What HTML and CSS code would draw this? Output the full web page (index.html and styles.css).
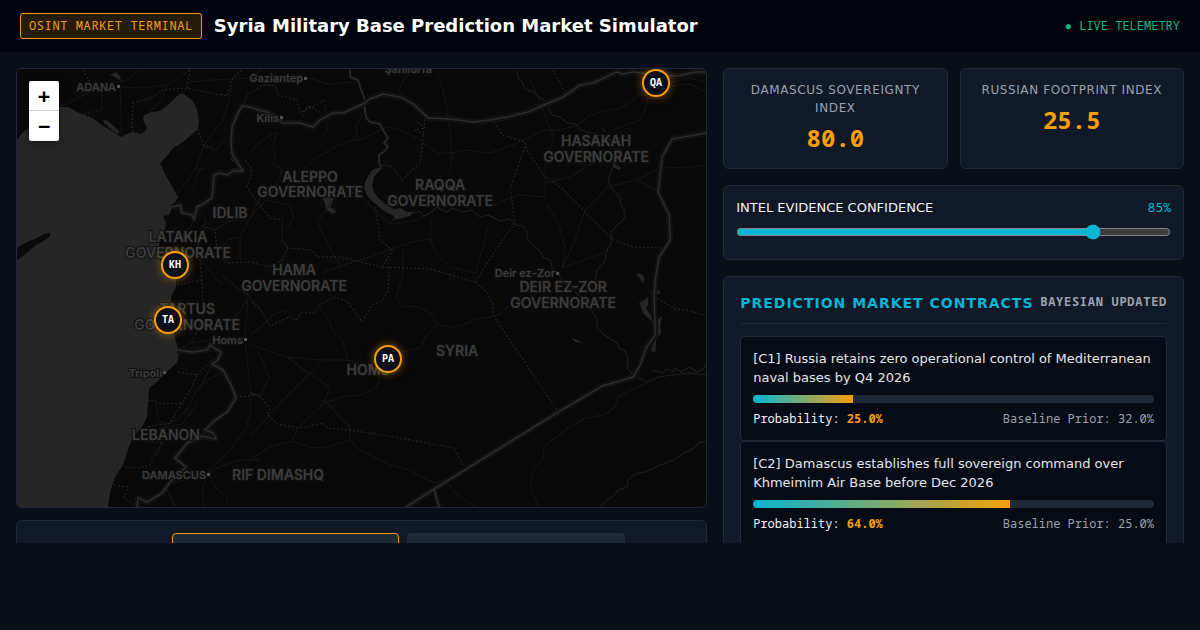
FILE: index.html
```html
<!DOCTYPE html>
<html lang="en">
<head>
    <meta charset="UTF-8">
    <meta name="viewport" content="width=device-width, initial-scale=1.0">
    <title>Syria Military Base Prediction Market Simulator</title>
    <link rel="stylesheet" href="styles.css">
</head>
<body>
    <header class="top-bar">
        <div class="brand">
            <span class="badge">OSINT MARKET TERMINAL</span>
            <h1>Syria Military Base Prediction Market Simulator</h1>
        </div>
        <span class="live">● LIVE TELEMETRY</span>
    </header>

    <main class="dashboard">
        <section class="left-col">
            <div class="map">
                <svg class="map-tiles" viewBox="17 69 689 438" preserveAspectRatio="xMidYMid slice" role="img" aria-label="Map of Syria">
                    <!-- sea, lakes -->
                    <path class="water" d="M17 140L23 132L29 128L44 115L59 107L68 107L72 109L77 112L90 117L105 127L114 132L121 137L127 134L133 132L142 134L147 128L143 120L144 115L152 112L160 111L167 106L177 96L182 93L192 100L197 109L198 116L199 122L198 129L190 136L183 142L173 148L167 156L160 163L164 172L170 183L178 197L173 206L169 215L163 216L166 223L164 233L160 242L157 253L162 267L176 278L176 287L171 297L172 305L173 320L174 335L179 352L177 363L165 373L157 382L149 388L148 403L147 417L142 427L133 437L128 450L123 465L115 477L110 492L108 507L17 507Z"/>
                    <path class="land" d="M17 248L25 243L37 238L44 234L51 233L49 237L42 242L36 245L30 250L24 255L17 260Z"/>
                    <path class="water" d="M103 120L108 121L119 131L119 134L112 130L104 123ZM91 117L97 122L94 122ZM110 75L116 72L120 76L121 81L116 78Z"/>
                    <path class="water" d="M382 168L378 168L372 170L368 176L365 182L364 188L366 194L371 200L377 205L384 211L392 215L395 218L390 221L396 219L402 218L410 216L413 212L407 212L400 208L394 209L390 207L384 203L378 198L374 192L372 186L374 177L379 171Z"/>
                    <path class="water" d="M322 197L334 198L332 204L330 207L337 212L332 214L329 211L326 211L325 204Z"/>
                    <path class="water" d="M602 127L606 132L603 131ZM612 163L616 165L620 167L620 170L614 168ZM636 274L641 274L644 277L643 284L640 279ZM639 302L643 301L648 297L648 304L646 309L651 315L652 322L648 318L643 313ZM650 292L659 290L660 294L651 295ZM662 316L660 325L661 333L656 339L655 352L650 351L653 345L655 334L658 327L657 320ZM572 338L577 340L582 343L575 342Z"/>
                    <circle class="water" cx="234" cy="159" r="3"/>

                    <!-- roads -->
                    <g class="road">
                        <path d="M60 107L80 97L100 87L127 80L140 70M120 88L122 135M120 87L142 88L167 85L178 78L190 70M167 85L162 99L150 112"/>
                        <path d="M232 85L228 104L223 120L212 134L203 147L199 160L195 170L186 182L177 193M203 147L216 150L225 138M195 170L205 168M193 193L195 180L200 170M240 260L240 237L250 218L257 203L267 186"/>
                        <path d="M190 82L212 80L250 78L262 70M243 106L248 92M310 78L327 84L358 82M382 70L410 72L402 82L398 92"/>
                        <path d="M277 132L273 145L275 157L273 164L283 170L275 186L267 200L258 208L250 218M250 152L262 140L277 132M303 170L317 157L337 146L350 141L365 138L378 131L387 127L400 130L417 138L432 150L440 154L467 150L490 153L515 144L545 130L560 130L578 125L590 115L605 111L620 108L633 100L643 90"/>
                        <path d="M437 73L443 90L447 112L450 133L451 150L452 160L449 175M363 113L356 126L357 140M325 105L327 130L318 140"/>
                        <path d="M330 187L348 190L363 198L376 212L388 223L402 223L417 220L430 213M267 200L290 205L294 219L284 232M333 200L317 223L328 245L342 268M322 273L335 268L350 263L372 256L397 247L412 242L430 239L432 217M430 239L435 253L450 267L475 273L483 247L488 227"/>
                        <path d="M490 207L505 200L520 195L545 197L545 160L554 138L530 78M545 183L570 177L593 163L618 148M545 203L557 220L565 247L562 268L603 253M562 268L575 240L585 210L596 200L607 187L637 180L650 173L662 167L683 168L706 165M637 180L658 192"/>
                        <path d="M613 130L640 120L645 110L648 98M670 86L690 84L706 92M672 82L690 78L706 82"/>
                        <path d="M250 335L262 326L275 313L290 310M250 345L287 357L323 360L348 360L370 368M258 350L269 377L260 397M250 437L265 420L280 403L323 360M287 357L310 374L330 387L324 403L298 428L292 441M324 403L342 397L360 395L377 387L380 372M327 403L340 417L350 427L350 440M318 305L330 322L332 330L342 340L348 360"/>
                        <path d="M250 460L260 453L270 447L292 441L310 447L325 448L350 440L360 450L375 457L390 465L410 470L422 477L433 482L447 482L453 490L460 497L477 507"/>
                        <path d="M400 352L420 348L427 335L437 325L450 327L463 325L476 319L490 317L502 313L509 304M437 325L432 314L420 307L402 306L396 296L402 280L403 250"/>
                        <path d="M647 383L630 390L618 397L615 407L603 415L585 418L565 430L543 447L544 457L533 470L531 487L538 507"/>
                        <path d="M245 280L248 295L245 340L250 387L250 413L245 430L237 440L230 450L218 462L207 473L190 478L165 486M208 473L215 487L227 497L228 506M208 473L222 466L240 460L260 460M248 295L232 284L222 275M248 295L262 310M248 298L234 320L228 334M208 473L202 490L204 507"/>
                        <path d="M180 300L192 315L190 333M177 350L192 343L210 340M155 400L158 420L166 425L178 419L190 405L196 390L210 378L224 372M135 440L155 430L182 424L197 404M204 350L214 360L207 374L199 390"/>
                        <path d="M176 285L190 262L200 240L206 222L200 210M217 253L228 240L240 237M215 230L228 222L243 217M200 260L217 280L222 284M180 240L190 228L197 215"/>
                    </g>

                    <!-- rivers -->
                    <g class="river">
                        <path class="wide" d="M350 70L350 77L358 80L361 90L364 97L365 113L367 119L370 122L380 124L384 132L388 138L384 143L388 147L384 152L379 155L379 162L381 168"/>
                        <path d="M413 213L419 211L424 216L430 213L437 207L446 212L452 208L463 212L472 210L480 217L488 215L500 221L510 219L515 225L523 226L527 232L527 238L532 245L539 250L544 258L550 260L552 267L557 272L562 280L570 284L576 293L586 301L593 313L597 319L597 328L606 336L617 343L619 348L626 352L628 360L627 368L633 375L637 377L647 382L658 377L672 375L690 373L706 375"/>
                        <path d="M517 70L518 78L522 82L525 89L533 92L540 98L548 103L549 110L552 115L560 117L567 123L576 124L580 130L590 133L605 137L611 141L615 150L622 150L615 157L613 167L610 174L608 182L613 190L620 198L620 205L624 210L624 219L616 226L611 232L611 243L606 252L605 261L597 270L595 280"/>
                        <path d="M652 373L654 370L662 373L666 369L673 372L674 368L681 372L689 367L697 372L703 369L706 363"/>
                        <path d="M706 442L700 442L692 449L682 454L673 460L658 466L645 472L635 474L628 480L627 487L618 490L613 496L608 499L600 507"/>
                    </g>

                    <!-- governorate boundaries -->
                    <g class="province">
                        <path d="M80 115L102 110L102 93L92 85L83 70M133 132L132 123L133 103L150 98L163 90L187 88L210 93L227 96L230 85L233 77L243 70"/>
                        <path d="M250 93L263 85L275 86L278 95L297 100L300 113L325 100M187 88L190 70M198 129L203 145L212 147M302 116L308 106L322 113"/>
                        <path d="M425 115L423 137L420 163L410 172L402 181L393 167L382 165M417 122L425 128L415 130L424 135"/>
                        <path d="M375 207L380 240L392 250L382 267L340 257L317 257L312 250L288 248L282 240L282 220L270 218L258 203L250 192L247 187L252 170L245 160M382 267L430 269L475 282L500 243L515 223L510 188L525 147M288 248L282 260L270 267L250 262L227 263L217 253L215 230L200 225"/>
                        <path d="M494 122L502 135L525 142L526 149L545 177L560 187L613 240L633 247L663 248M553 70L560 82L565 94"/>
                        <path d="M475 282L487 292L493 305L493 315L558 412"/>
                        <path d="M389 267L388 290L383 300L372 305L362 322L348 302L335 297L318 305L315 313L300 313L297 320L289 317L270 326L263 313L250 300"/>
                        <path d="M236 397L260 395L250 393L262 398L270 410L267 414L277 424L300 428L323 423L327 428L350 430L400 438L454 448L465 469"/>
                        <path d="M657 298L675 309L687 310L706 316M198 243L202 280L203 317L192 342M202 280L177 285"/>
                        <path d="M178 372L197 375L192 387L182 403L165 404L148 400M182 403L170 423L147 427M197 375L207 364M162 443L150 465L137 468L125 467M162 443L140 440M165 486L175 506M114 485L128 487L124 498L134 504"/>
                    </g>

                    <!-- country borders, soft band first -->
                    <g class="border-band">
                        <path id="turkey" d="M172 207L180 205L182 213L192 215L194 220L197 207L205 203L212 198L214 175L220 173L227 175L233 171L243 171L237 162L232 154L231 143L232 127L237 115L242 106L250 107L262 111L270 113L282 123L300 123L313 127L320 120L333 113L343 113L363 104L370 99L383 94L400 97L413 104L428 118L450 119L473 122L490 120L507 117L528 112L548 103L563 97L580 85L593 83L617 72L622 74L633 72L657 75L677 76L695 72L706 72"/>
                        <path id="iraq" d="M706 133L672 139L662 157L658 192L669 215L670 240L659 257L655 280L654 297L655 335L646 348L640 365L633 377L602 386L558 412L500 448L434 489L406 507M434 489L439 507"/>
                        <path id="lebanon" d="M177 350L192 352L207 350L210 345L221 352L218 360L212 364L223 370L232 387L236 398L227 412L215 420L205 430L213 433L216 439L202 436L187 443L175 458L186 467L170 482L162 493L147 502L138 498L137 507"/>
                    </g>
                    <g class="border-line">
                        <use href="#turkey"/>
                        <use href="#iraq"/>
                        <use href="#lebanon"/>
                    </g>

                    <g class="town">
                        <rect x="117" y="85" width="3" height="3"/>
                        <rect x="304" y="77" width="3" height="3"/>
                        <rect x="280" y="116" width="3" height="3"/>
                        <rect x="244" y="338" width="3" height="3"/>
                        <rect x="163" y="371" width="3" height="3"/>
                        <rect x="207" y="473" width="3" height="3"/>
                        <rect x="556" y="272" width="3" height="3"/>
                    </g>

                    <g class="region-name">
                        <text x="310" y="182">ALEPPO</text>
                        <text x="310" y="197">GOVERNORATE</text>
                        <text x="440" y="190">RAQQA</text>
                        <text x="440" y="206">GOVERNORATE</text>
                        <text x="596" y="146">HASAKAH</text>
                        <text x="596" y="162">GOVERNORATE</text>
                        <text x="230" y="218">IDLIB</text>
                        <text x="178" y="242">LATAKIA</text>
                        <text x="178" y="258">GOVERNORATE</text>
                        <text x="294" y="275">HAMA</text>
                        <text x="294" y="291">GOVERNORATE</text>
                        <text x="563" y="292">DEIR EZ-ZOR</text>
                        <text x="563" y="308">GOVERNORATE</text>
                        <text x="187" y="314">TARTUS</text>
                        <text x="187" y="330">GOVERNORATE</text>
                        <text x="368" y="375">HOMS</text>
                        <text x="457" y="356">SYRIA</text>
                        <text x="166" y="440">LEBANON</text>
                        <text x="278" y="480">RIF DIMASHQ</text>
                    </g>
                    <g class="city-name">
                        <text x="116" y="91">ADANA</text>
                        <text x="206" y="479">DAMASCUS</text>
                        <text x="303" y="82">Gaziantep</text>
                        <text x="279" y="122">Kilis</text>
                        <text x="432" y="73">Şanlıurfa</text>
                        <text x="243" y="344">Homs</text>
                        <text x="162" y="377">Tripoli</text>
                        <text x="555" y="277">Deir ez-Zor</text>
                    </g>
                </svg>

                <div class="zoom-control">
                    <button type="button" aria-label="Zoom in">+</button>
                    <button type="button" aria-label="Zoom out">−</button>
                </div>

                <div class="marker qa">QA</div>
                <div class="marker kh">KH</div>
                <div class="marker ta">TA</div>
                <div class="marker pa">PA</div>
            </div>

            <div class="panel scenarios">
                <button type="button" class="scenario active" aria-label="First scenario"></button>
                <button type="button" class="scenario" aria-label="Second scenario"></button>
            </div>
        </section>

        <section class="right-col">
            <div class="metrics">
                <div class="panel metric">
                    <div class="metric-label">DAMASCUS SOVEREIGNTY INDEX</div>
                    <div class="metric-value">80.0</div>
                </div>
                <div class="panel metric">
                    <div class="metric-label">RUSSIAN FOOTPRINT INDEX</div>
                    <div class="metric-value">25.5</div>
                </div>
            </div>

            <div class="panel confidence">
                <div class="confidence-head">
                    <label for="confidence">INTEL EVIDENCE CONFIDENCE</label>
                    <output id="confidenceValue" for="confidence">85%</output>
                </div>
                <input type="range" id="confidence" min="10" max="100" value="85">
            </div>

            <div class="panel contracts">
                <h2>PREDICTION MARKET CONTRACTS <span>BAYESIAN UPDATED</span></h2>

                <article class="contract">
                    <p>[C1] Russia retains zero operational control of Mediterranean naval bases by Q4 2026</p>
                    <div class="bar"><div class="bar-fill" style="width: 25%"></div></div>
                    <div class="odds">
                        <span>Probability: <strong>25.0%</strong></span>
                        <span class="prior">Baseline Prior: 32.0%</span>
                    </div>
                </article>

                <article class="contract">
                    <p>[C2] Damascus establishes full sovereign command over Khmeimim Air Base before Dec 2026</p>
                    <div class="bar"><div class="bar-fill" style="width: 64%"></div></div>
                    <div class="odds">
                        <span>Probability: <strong>64.0%</strong></span>
                        <span class="prior">Baseline Prior: 25.0%</span>
                    </div>
                </article>
            </div>
        </section>
    </main>

    <script>
        document.getElementById('confidence').addEventListener('input', function(event) {
            document.getElementById('confidenceValue').textContent = event.target.value + '%';
        });
    </script>
</body>
</html>
```
FILE: styles.css
```css
* {
    box-sizing: border-box;
}
body {
    margin: 0;
    background: #0a0e17;
    color: #f3f4f6;
    font-family: 'DejaVu Sans', sans-serif;
    line-height: 1.5;
}
h1, h2, p {
    margin: 0;
}
.badge, .live, .marker, .metric-value, .confidence-head output, .contracts h2 span, .odds {
    font-family: 'Noto Sans Mono', 'DejaVu Sans Mono', monospace;
}

/* header */
.top-bar {
    display: flex;
    justify-content: space-between;
    align-items: center;
    padding: 12px 20px;
    background: #02050e;
    border-bottom: 1px solid #02050e;
}
.brand {
    display: flex;
    align-items: center;
    gap: 12px;
}
.brand h1 {
    font-size: 18px;
    color: #fff;
}
.badge {
    padding: 3px 8px;
    border: 1px solid #f59e0b;
    border-radius: 3px;
    background: rgba(245, 158, 11, 0.15);
    color: #f59e0b;
    font-size: 12px;
    letter-spacing: 0.05em;
}
.live {
    color: #10b981;
    font-size: 12px;
}

/* layout */
.dashboard {
    display: grid;
    grid-template-columns: 3fr 2fr;
    gap: 16px;
    height: 78vh;
    padding: 16px 16px 0;
    overflow: hidden;
}
.left-col {
    display: flex;
    flex-direction: column;
    gap: 12px;
    min-width: 0;
}
.right-col {
    display: flex;
    flex-direction: column;
    gap: 16px;
    min-width: 0;
}
.panel {
    flex-shrink: 0;
    padding: 12px;
    border: 1px solid #1f2937;
    border-radius: 6px;
    background: #111827;
}

/* map */
.map {
    position: relative;
    flex-shrink: 0;
    height: 440px;
    border: 1px solid #1f2937;
    border-radius: 6px;
    background: #090909;
    overflow: hidden;
}
.map-tiles {
    display: block;
    width: 100%;
    height: 100%;
}
.water {
    fill: #262626;
}
.land {
    fill: #090909;
}
.road, .river, .province, .border-band, .border-line {
    fill: none;
    stroke-linejoin: round;
}
.road {
    stroke: #161616;
}
.river {
    stroke: #1f1f1f;
}
.river .wide {
    stroke: #262626;
    stroke-width: 2;
}
.province {
    stroke: #282828;
    stroke-dasharray: 2 2;
}
.border-band {
    stroke: #111;
    stroke-width: 6;
}
/* the reused paths inherit their stroke from here */
.border-line {
    stroke: #2c2c2c;
    stroke-width: 1.5;
}
.town {
    fill: #555;
}
.region-name, .city-name {
    fill: #3d3d3d;
    stroke: #101010;
    stroke-width: 2;
    paint-order: stroke;
    font-family: Inter, sans-serif;
    font-weight: 600;
}
.region-name {
    font-size: 14px;
    text-anchor: middle;
}
.city-name {
    font-size: 11px;
    text-anchor: end;
}
.zoom-control {
    position: absolute;
    top: 12px;
    left: 12px;
    border-radius: 2px;
    box-shadow: 0 1px 5px rgba(0, 0, 0, 0.65);
    overflow: hidden;
}
.zoom-control button {
    display: block;
    width: 30px;
    height: 30px;
    padding: 0;
    border: none;
    background: #fff;
    color: #000;
    font: bold 20px/30px 'DejaVu Sans Mono', monospace;
    cursor: pointer;
}
.zoom-control button:first-child {
    border-bottom: 1px solid #ccc;
}
.marker {
    position: absolute;
    width: 28px;
    height: 28px;
    border: 2px solid #f59e0b;
    border-radius: 50%;
    background: #0b0f19;
    box-shadow: 0 0 8px rgba(245, 158, 11, 0.5);
    color: #fff;
    font-size: 10px;
    font-weight: bold;
    line-height: 22px;
    text-align: center;
}
.marker.qa {
    left: 625px;
    top: 0;
}
.marker.kh {
    left: 144px;
    top: 182px;
}
.marker.ta {
    left: 137px;
    top: 237px;
}
.marker.pa {
    left: 357px;
    top: 276px;
}

/* scenario buttons */
.scenarios {
    display: flex;
    justify-content: center;
    gap: 8px;
    padding-left: 86px;
}
.scenario {
    width: 218px;
    height: 32px;
    border: 1px solid #1f2937;
    border-radius: 4px;
    background: #1f2937;
    cursor: pointer;
}
.scenario.active {
    width: 227px;
    border-color: #f59e0b;
}

/* metrics */
.metrics {
    display: grid;
    grid-template-columns: 1fr 1fr;
    gap: 12px;
}
.metric {
    text-align: center;
}
.metric-label {
    color: #9ca3af;
    font-size: 12px;
    letter-spacing: 0.05em;
}
.metric-value {
    margin-top: 2px;
    color: #f59e0b;
    font-size: 24px;
    font-weight: bold;
    line-height: 37px;
}

/* confidence slider */
.confidence-head {
    display: flex;
    justify-content: space-between;
    align-items: center;
    margin-bottom: 7px;
    font-size: 13px;
    line-height: 19px;
}
.confidence-head output {
    color: #06b6d4;
    font-size: 13px;
}
.confidence input {
    display: block;
    width: 100%;
    height: 16px;
    margin: 0 0 7px;
    accent-color: #06b6d4;
    color-scheme: dark;
}

/* contracts */
.contracts {
    padding: 16px;
}
.contracts h2 {
    display: flex;
    justify-content: space-between;
    margin-bottom: 12px;
    padding-bottom: 9px;
    border-bottom: 1px solid #1f2937;
    color: #06b6d4;
    font-size: 14px;
    letter-spacing: 1px;
}
.contracts h2 span {
    color: #9ca3af;
    font-size: 12px;
    letter-spacing: 0.06em;
}
.contract {
    padding: 12px;
    border: 1px solid #1f2937;
    border-radius: 4px;
    background: #060b15;
    line-height: 19px;
}
.contract p {
    margin-bottom: 8px;
    color: #e5e7eb;
    font-size: 13px;
}
.bar {
    height: 8px;
    margin-bottom: 6px;
    border-radius: 4px;
    background: #1f2937;
    overflow: hidden;
}
.bar-fill {
    height: 100%;
    background: linear-gradient(90deg, #06b6d4, #f59e0b);
}
.odds {
    display: flex;
    justify-content: space-between;
    font-size: 12px;
}
.odds strong {
    color: #f59e0b;
}
.prior {
    color: #9ca3af;
}
```
